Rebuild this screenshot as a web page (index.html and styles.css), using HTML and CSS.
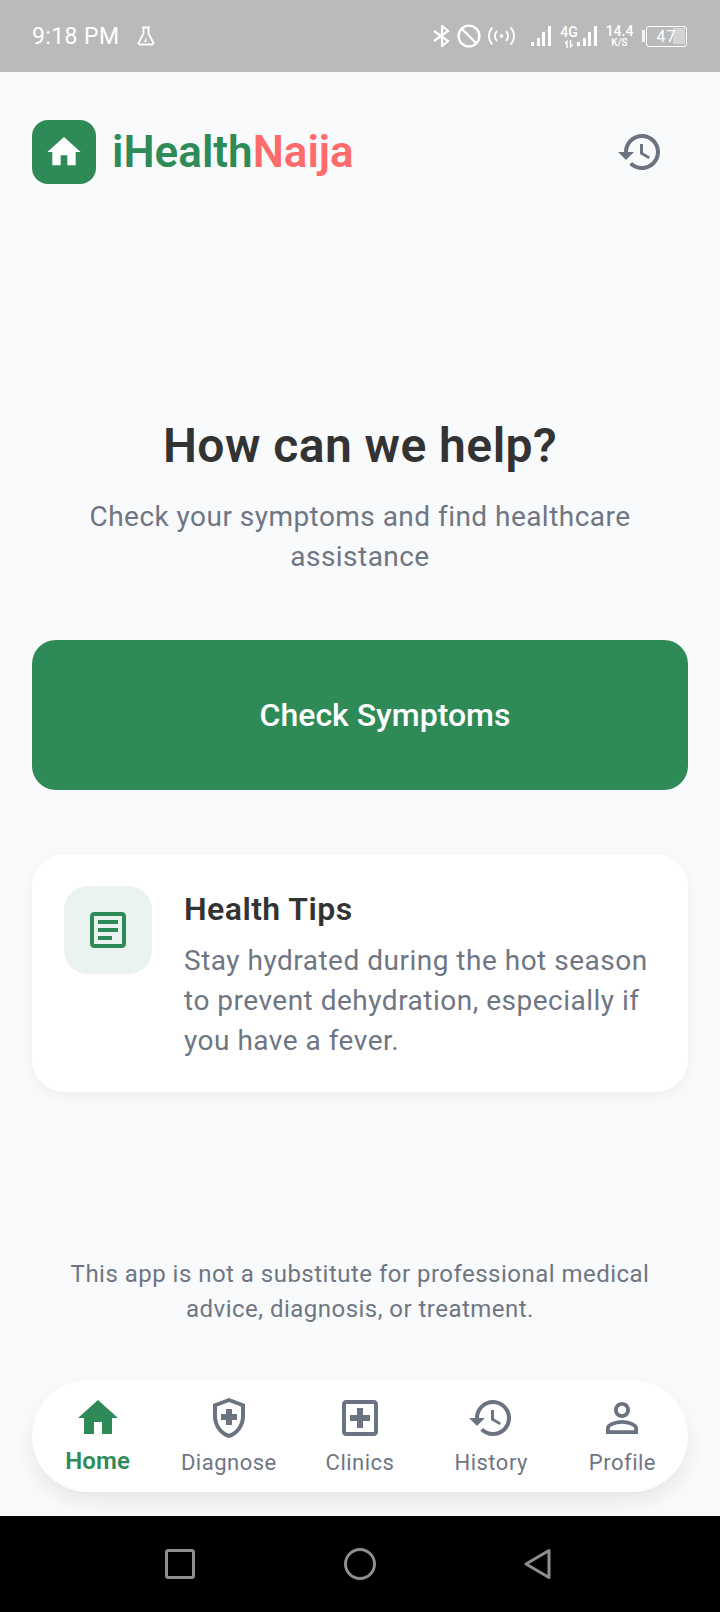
FILE: index.html
```html
<!DOCTYPE html>
<html lang="en">
<head>
  <meta charset="UTF-8">
  <title>iHealthNaija</title>
  <meta name="viewport" content="width=device-width,initial-scale=1">
  <link rel="stylesheet" href="styles.css">
</head>
<body>
  <div class="app">
    <!-- status bar -->
    <div class="statusbar">
      <div class="status-left">
        <span class="clock">9:18 PM</span>
        <svg class="flask" viewBox="0 0 18 20" width="18" height="20"><path d="M5 1.500h8M6.500 1.500v6L1.700 16.500a1.300 1.300 0 0 0 1.200 2h12.200a1.300 1.300 0 0 0 1.200-2L11.500 7.500v-6" fill="none" stroke="#fff" stroke-width="1.800"/><path d="M7 16l2.500-5v5z" fill="#fff"/></svg>
      </div>
      <div class="status-right">
        <svg class="st-bt" viewBox="0 0 17 22" width="17" height="22"><path d="M1 6l14 10-6 5V1l6 5L1 16" fill="none" stroke="#fff" stroke-width="2.200"/></svg>
        <svg class="st-ban" viewBox="0 0 24 24" width="24" height="24"><circle cx="12" cy="12" r="10.400" fill="none" stroke="#fff" stroke-width="2.400"/><path d="M5 5l14 14" stroke="#fff" stroke-width="2.400"/></svg>
        <svg class="st-hot" viewBox="0 0 27 20" width="27" height="20"><circle cx="13.500" cy="10" r="1.800" fill="#fff"/><path d="M9 5a7 7 0 0 0 0 10M18 5a7 7 0 0 1 0 10M4.500 1.500a12 12 0 0 0 0 17M22.500 1.500a12 12 0 0 1 0 17" fill="none" stroke="#fff" stroke-width="1.800"/></svg>
        <div class="bars st-bars"><i class="b1"></i><i class="b2"></i><i class="b3"></i><i class="b4"></i></div>
        <div class="net"><b>4G</b><svg viewBox="0 0 10 8" width="10" height="8"><path d="M3 8V1.500L1 3.500M6.500 0v6.500L8.500 4.500" fill="none" stroke="#fff" stroke-width="1.500"/></svg></div>
        <div class="bars"><i class="b1"></i><i class="b2"></i><i class="b3"></i><i class="b4"></i></div>
        <div class="speed"><b>14.4</b><small>K/S</small></div>
        <div class="battery"><span class="cap"></span><div class="cell"><span class="fill"></span><span class="pct">47</span></div></div>
      </div>
    </div>

    <div class="page">
      <!-- header -->
      <header class="topbar">
        <div class="brand">
          <div class="logo"><svg viewBox="0 0 24 24" width="40" height="40"><path d="M10 20v-6h4v6h5v-8h3L12 3 2 12h3v8z" fill="#fff"/></svg></div>
          <div class="brand-name">iHealth<span>Naija</span></div>
        </div>
        <svg class="top-history" viewBox="0 0 24 24" width="48" height="48"><path d="M13 3c-4.970 0-9 4.030-9 9H1l3.890 3.890.07.14L9 12H6c0-3.870 3.130-7 7-7s7 3.130 7 7-3.130 7-7 7c-1.930 0-3.680-.79-4.940-2.060l-1.420 1.420C8.270 19.990 10.510 21 13 21c4.970 0 9-4.030 9-9s-4.030-9-9-9zm-1 5v5l4.280 2.540.72-1.210-3.500-2.080V8H12z" fill="#6b7280"/></svg>
      </header>

      <main class="content">
        <h1>How can we help?</h1>
        <p class="lead">Check your symptoms and find healthcare assistance</p>
        <button class="check-btn">Check Symptoms</button>

        <section class="tip-card">
          <div class="tip-icon"><svg viewBox="0 0 24 24" width="48" height="48"><path d="M19 5v14H5V5h14m0-2H5c-1.100 0-2 .9-2 2v14c0 1.100.9 2 2 2h14c1.100 0 2-.9 2-2V5c0-1.100-.9-2-2-2zM14 17H7v-2h7v2zm3-4H7v-2h10v2zm0-4H7V7h10v2z" fill="#2e8b57"/></svg></div>
          <div class="tip-body">
            <h3>Health Tips</h3>
            <p>Stay hydrated during the hot season to prevent dehydration, especially if you have a fever.</p>
          </div>
        </section>

        <p class="disclaimer">This app is not a substitute for professional medical advice, diagnosis, or treatment.</p>
      </main>

      <!-- bottom nav -->
      <nav class="bottom-nav">
        <div class="nav-item active">
          <svg viewBox="0 0 24 24" width="48" height="48"><path d="M10 20v-6h4v6h5v-8h3L12 3 2 12h3v8z" fill="#2e8b57"/></svg>
          <span>Home</span>
        </div>
        <div class="nav-item">
          <svg viewBox="0 0 24 24" width="48" height="48"><path d="M12 2L4 5v6.090c0 5.050 3.410 9.760 8 10.910 4.590-1.150 8-5.860 8-10.910V5l-8-3zm6 9.090c0 4-2.550 7.700-6 8.830-3.450-1.130-6-4.820-6-8.830V6.310l6-2.250 6 2.250v4.780z" fill="#6b7280"/><path d="M10.500 7.500h3V10H16v3h-2.500v2.500h-3V13H8v-3h2.500z" fill="#6b7280"/></svg>
          <span>Diagnose</span>
        </div>
        <div class="nav-item">
          <svg viewBox="0 0 24 24" width="48" height="48"><path d="M19 3H5c-1.100 0-2 .9-2 2v14c0 1.100.9 2 2 2h14c1.100 0 2-.9 2-2V5c0-1.100-.9-2-2-2zm0 16H5V5h14v14z" fill="#6b7280"/><path d="M10.500 7h3v3.500H17v3h-3.500V17h-3v-3.500H7v-3h3.500z" fill="#6b7280"/></svg>
          <span>Clinics</span>
        </div>
        <div class="nav-item">
          <svg viewBox="0 0 24 24" width="48" height="48"><path d="M13 3c-4.970 0-9 4.030-9 9H1l3.890 3.890.07.14L9 12H6c0-3.870 3.130-7 7-7s7 3.130 7 7-3.130 7-7 7c-1.930 0-3.680-.79-4.940-2.060l-1.420 1.420C8.270 19.990 10.510 21 13 21c4.970 0 9-4.030 9-9s-4.030-9-9-9zm-1 5v5l4.280 2.540.72-1.210-3.500-2.080V8H12z" fill="#6b7280"/></svg>
          <span>History</span>
        </div>
        <div class="nav-item">
          <svg viewBox="0 0 24 24" width="48" height="48"><path d="M12 5.900c1.160 0 2.100.94 2.100 2.100s-.94 2.100-2.100 2.100S9.900 9.160 9.900 8s.94-2.100 2.100-2.100m0 9c2.970 0 6.100 1.460 6.100 2.100v1.100H5.900V17c0-.64 3.130-2.100 6.100-2.100M12 4C9.790 4 8 5.790 8 8s1.790 4 4 4 4-1.790 4-4-1.790-4-4-4zm0 9c-2.670 0-8 1.340-8 4v3h16v-3c0-2.660-5.330-4-8-4z" fill="#6b7280"/></svg>
          <span>Profile</span>
        </div>
      </nav>
    </div>

    <!-- android nav -->
    <div class="sysnav">
      <svg viewBox="0 0 32 32" width="32" height="32"><rect x="2.500" y="2.500" width="27" height="27" rx="2" fill="none" stroke="#8e8e8e" stroke-width="3"/></svg>
      <svg viewBox="0 0 34 34" width="34" height="34"><circle cx="17" cy="17" r="14.500" fill="none" stroke="#8e8e8e" stroke-width="3"/></svg>
      <svg viewBox="0 0 30 34" width="30" height="34"><path d="M3 17L26 3.500v27z" fill="none" stroke="#8e8e8e" stroke-width="3" stroke-linejoin="round"/></svg>
    </div>
  </div>
</body>
</html>
```

FILE: styles.css
```css
*{box-sizing:border-box}
body{margin:0;font-family:Roboto,"Noto Sans",sans-serif;background:#f9fafb;color:#333}
.app{width:720px;height:1612px;display:flex;flex-direction:column;overflow:hidden}

/* status bar */
.statusbar{height:72px;background:#bababa;color:#fff;display:flex;align-items:center;justify-content:space-between;padding:0 33px 0 32px;flex:none}
.status-left{display:flex;align-items:center;gap:18px}
.clock{font-size:23px;letter-spacing:.4px}
.status-right{display:flex;align-items:center}
.st-ban{margin-left:7px}
.st-hot{margin-left:7px}
.st-bars{margin-left:16px}
.bars{display:flex;align-items:flex-end;gap:2.300px;height:20px;width:20px}
.bars i{width:3.300px;background:#fff;display:block}
.b1{height:4px}.b2{height:8px}.b3{height:14px}.b4{height:20px}
.net,.speed{display:flex;flex-direction:column;align-items:center;line-height:1}
.net{width:16px;margin:0 0 0 10px}
.net svg{display:block;margin-top:1px}
.net b,.speed b{font-size:14px;font-weight:500;letter-spacing:0}
.speed small{font-size:10px;font-weight:500}
.speed{width:27px;margin-left:9px}
.battery{display:flex;align-items:center;margin-left:9px}
.cap{width:3px;height:12px;background:#fff;opacity:.8;margin-right:1px}
.cell{position:relative;width:41px;height:21px;border:1.500px solid #fff;border-radius:3px;display:flex;align-items:center;justify-content:center}
.fill{position:absolute;right:1.500px;top:1.500px;bottom:1.500px;width:12px;background:#d4d4d4}
.pct{position:relative;font-size:16px;letter-spacing:1px}

/* page */
.page{flex:1;display:flex;flex-direction:column;padding:48px 32px 24px;min-height:0}
.topbar{display:flex;align-items:center;justify-content:space-between;flex:none}
.brand{display:flex;align-items:center;gap:16px}
.logo{width:64px;height:64px;border-radius:16px;background:#2e8b57;display:flex;align-items:center;justify-content:center}
.brand-name{font-size:44px;font-weight:600;color:#2e8b57}
.brand-name span{color:#ff6b6b}
.top-history{margin-right:24px}
.content{flex:1;display:flex;flex-direction:column;padding-top:234px;min-height:0}
h1{margin:0;text-align:center;font-size:48px;line-height:56px;font-weight:600;letter-spacing:.45px;color:#333}
.lead{margin:23px 16px 0;text-align:center;font-size:28px;line-height:40px;font-weight:400;color:#6f7683;letter-spacing:.46px}
.check-btn{margin-top:63px;height:150px;width:100%;border:none;border-radius:24px;background:#2e8b57;color:#fff;font:500 32px Roboto,sans-serif;letter-spacing:0;padding:0 0 0 50px}
.tip-card{margin-top:64px;background:#fff;border-radius:32px;padding:32px 32px 31px;display:flex;gap:32px;box-shadow:0 4px 16px rgba(0,0,0,.05)}
.tip-icon{width:88px;height:88px;flex:none;border-radius:24px;background:#eaf3ef;display:flex;align-items:center;justify-content:center}
.tip-body{padding-top:1px}
.tip-body h3{margin:0;font-size:32px;line-height:44px;font-weight:600;letter-spacing:.45px;color:#333}
.tip-body p{margin:10px 0 0;font-size:28px;line-height:40px;font-weight:400;color:#6f7683;letter-spacing:.5px}
.disclaimer{margin:165px 0 0;text-align:center;font-size:24px;line-height:35px;font-weight:400;color:#6f7683;letter-spacing:.48px}

/* bottom nav */
.bottom-nav{height:112px;flex:none;background:#fff;border-radius:56px;display:flex;box-shadow:0 10px 20px rgba(0,0,0,.08)}
.nav-item{flex:1;display:flex;flex-direction:column;align-items:center;padding-top:14px;color:#6f7683;font-size:22px;font-weight:400;letter-spacing:.5px;line-height:30px}
.nav-item svg{display:block;margin-bottom:6px}
.nav-item.active{color:#2e8b57;font-size:24px;font-weight:600;letter-spacing:.1px}
.nav-item.active svg{margin-bottom:4px}

/* android nav */
.sysnav{height:96px;flex:none;background:#000;display:flex;align-items:center;padding:0 167px 0 164px;justify-content:space-between}
```
